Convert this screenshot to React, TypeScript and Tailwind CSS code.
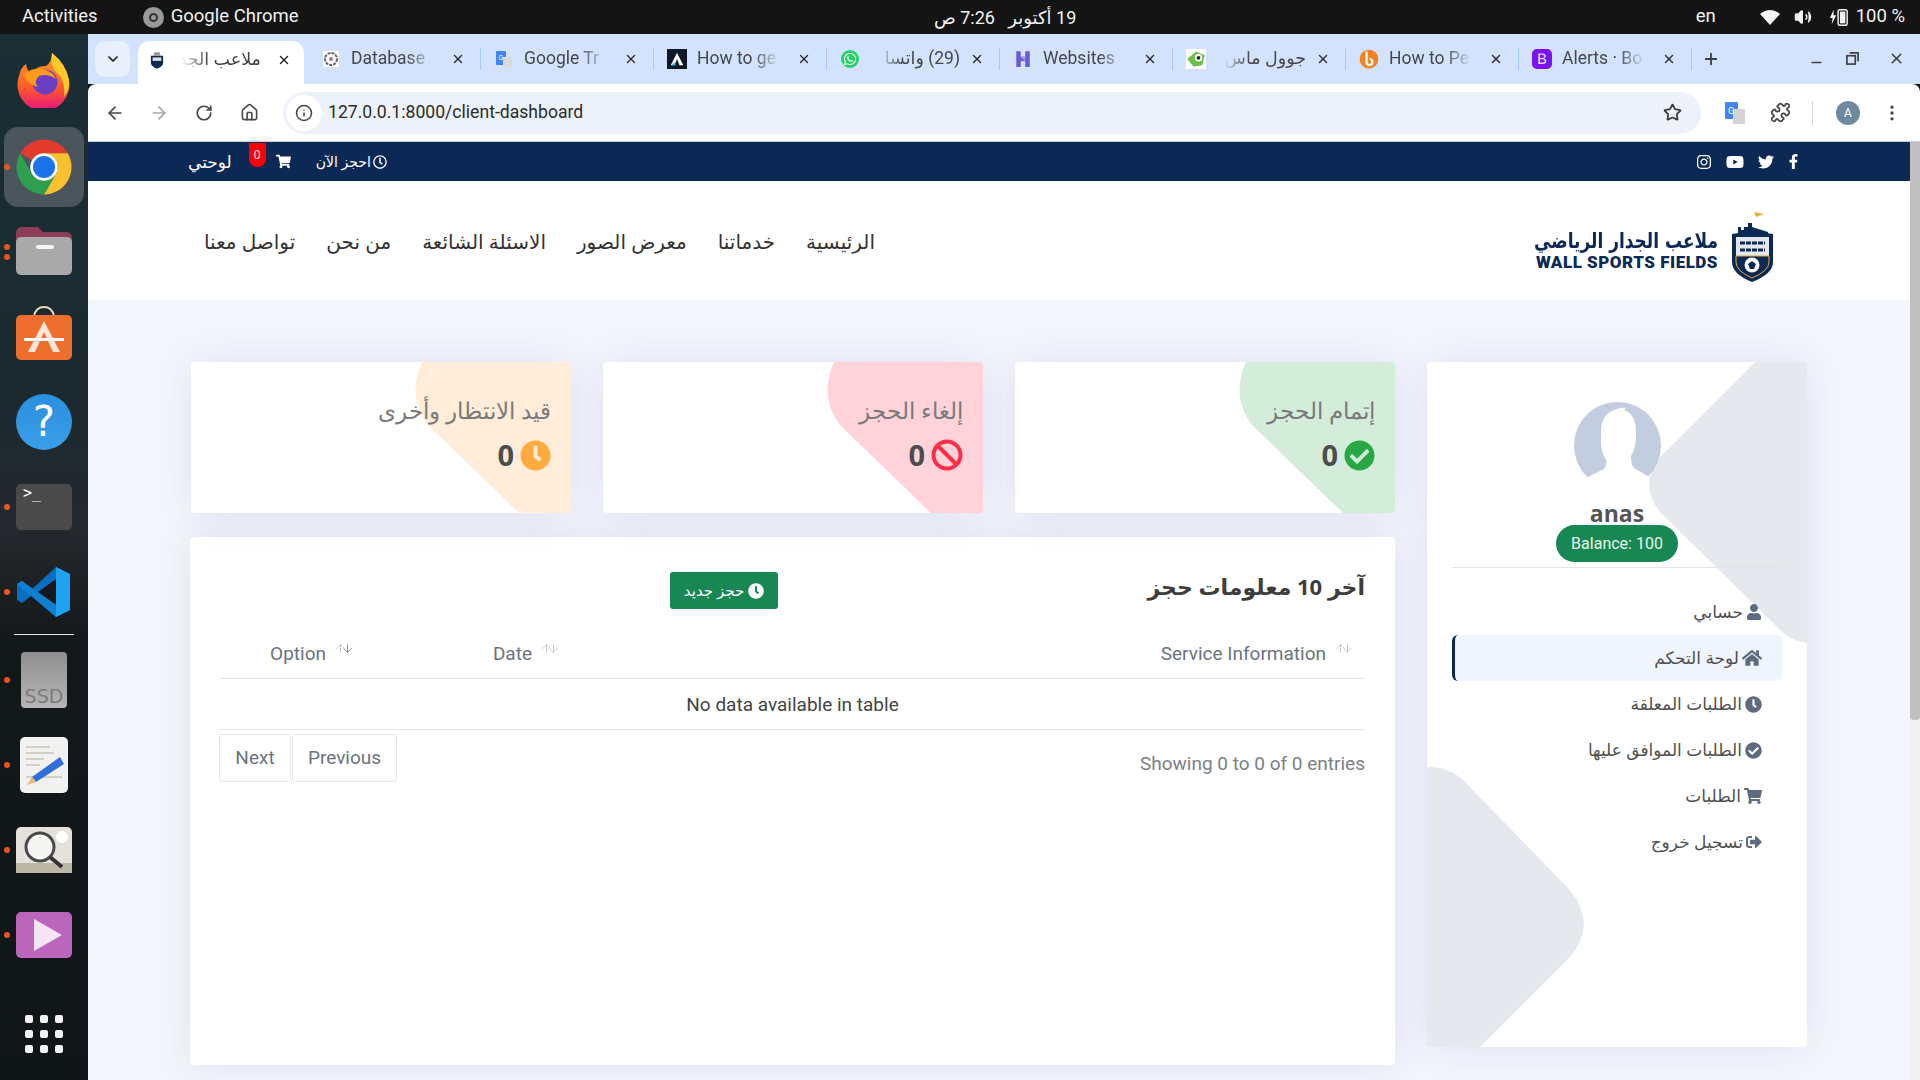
import React from "react";
import {
  FaUser, FaHome, FaClock, FaCheckCircle, FaShoppingCart, FaSignOutAlt, FaBan,
  FaInstagram, FaYoutube, FaTwitter, FaFacebookF, FaWhatsapp, FaRegClock,
} from "react-icons/fa";
import { BsBootstrapFill } from "react-icons/bs";
import { ArrowLeft, ArrowRight, RotateCw, Home, Info, Star, Puzzle, MoreVertical, ChevronDown, X, Plus, Minus, Volume2, ArrowUp, ArrowDown } from "lucide-react";

const GFav = () => (
  <svg viewBox="0 0 16 16" className="w-4 h-5"><rect x="0" y="0" width="10" height="14" rx="1" fill="#4285f4" /><rect x="7" y="6" width="9" height="10" fill="#d9d9d9" /><text x="2.5" y="9" fontSize="7" fill="#fff" fontFamily="Roboto">G</text></svg>
);
const Tabs: { t: string; rtl?: boolean; fav: React.ReactNode }[] = [
  { t: "Database", fav: <svg viewBox="0 0 16 16" className="w-4 h-4"><rect width="16" height="16" fill="#fff" /><circle cx="8" cy="8" r="6" fill="none" stroke="#666" strokeWidth="2" strokeDasharray="3 1" /><circle cx="8" cy="8" r="2" fill="#888" /></svg> },
  { t: "Google Tr", fav: <GFav /> },
  { t: "How to ge", fav: <svg viewBox="0 0 16 16" className="w-5 h-5"><rect width="16" height="16" fill="#111827" /><path d="M8 3 L13 13 H10 L8 8 L6 13 H3 Z" fill="#fff" /><path d="M3 13 H7 L6 11 Z" fill="#38bdf8" /></svg> },
  { t: "(29) واتسا", rtl: true, fav: <span className="flex w-[18px] h-[18px] items-center justify-center rounded-full bg-[#25d366] text-white"><FaWhatsapp size={14} /></span> },
  { t: "Websites", fav: <svg viewBox="0 0 16 16" className="w-[18px] h-5"><path d="M2 1 H6 V6 H10 V1 H14 V15 H10 V10 H6 V15 H2 Z" fill="#6d5bd0" /><path d="M6 6 L10 10 V6 Z" fill="#a79be8" /></svg> },
  { t: "جوول ماس", rtl: true, fav: <svg viewBox="0 0 16 16" className="w-5 h-5"><rect width="16" height="16" fill="#fff" /><path d="M1 8 L8 2 L15 5 L13 13 L6 14 Z" fill="#6cc04a" /><circle cx="10" cy="7" r="3" fill="#fff" /><circle cx="10" cy="7" r="1.5" fill="#222" /></svg> },
  { t: "How to Pe", fav: <svg viewBox="0 0 16 16" className="w-5 h-5"><circle cx="8" cy="8" r="7.5" fill="#f58220" /><path d="M6 2 V11 A2.4 2.4 0 1 0 8.5 8" stroke="#fff" strokeWidth="1.8" fill="none" /></svg> },
  { t: "Alerts · Bo", fav: <span className="text-[#7b12f0] flex"><BsBootstrapFill size={20} /></span> },
];

function Tab({ t, rtl, fav }: { t: string; rtl?: boolean; fav: React.ReactNode }) {
  return (
    <>
      <div className="flex items-center w-[166px] h-full pl-3 pb-[8px]">
        <span className="w-5 flex justify-center shrink-0 -ml-[2px]">{fav}</span>
        <span
          dir={rtl ? "rtl" : "ltr"}
          className={`ml-[10px] w-[90px] whitespace-nowrap text-[17.5px] text-[#45474c] ${rtl ? "[mask-image:linear-gradient(to_left,black_62%,transparent_92%)]" : "[mask-image:linear-gradient(to_right,black_62%,transparent_92%)]"}`}
        >
          {t}
        </span>
        <X size={14} strokeWidth={2.4} className="ml-[10px] text-[#2b2d30] shrink-0" />
      </div>
      <div className="w-px h-[22px] mx-[3px] mb-[8px] bg-[#a8c7fa]" />
    </>
  );
}

function DockItem({ dots = 0, active, children }: { dots?: number; active?: boolean; children: React.ReactNode }) {
  return (
    <div className="relative h-[85px] w-full flex items-center justify-center shrink-0">
      {active && <div className="absolute left-[4px] top-[3px] w-[80px] h-[80px] rounded-[14px] bg-[#4a565b]" />}
      <div className="absolute left-[4px] top-0 bottom-0 flex flex-col justify-center gap-[4px]">
        {Array.from({ length: dots }).map((_, i) => <span key={i} className="block w-[6px] h-[6px] rounded-full bg-[#e95420]" />)}
      </div>
      <div className="relative">{children}</div>
    </div>
  );
}

function Dock() {
  return (
    <div className="w-[88px] shrink-0 pt-[5px] flex flex-col bg-[linear-gradient(to_bottom,#1a2e35_0%,#1c2a30_35%,#24282c_48%,#13181b_58%,#101518_100%)]">
      <DockItem>
        <svg viewBox="0 0 56 56" className="w-[56px] h-[56px] -mt-[4px]">
          <defs>
            <linearGradient id="ff1" x1="0" y1="0" x2="0" y2="1"><stop offset="0" stopColor="#ffa01f" /><stop offset="0.6" stopColor="#ff5a2b" /><stop offset="1" stopColor="#e3127f" /></linearGradient>
          </defs>
          <path d="M36 1 Q50 12 53 28 A26 26 0 1 1 3 24 Q5 15 10 12 Q11 19 15 21 Q22 13 30 14 Q36 10 36 1Z" fill="url(#ff1)" />
          <path d="M36 1 Q50 12 53 28 Q54 38 48 45 Q50 28 40 20 Q34 14 36 1Z" fill="#ffc928" />
          <circle cx="29" cy="30" r="12.5" fill="#6a3ec2" />
          <path d="M8 22 Q18 14 30 18 Q38 21 40 27 Q31 21 23 24 Q17 30 22 35 Q10 32 8 22Z" fill="#ff9a1a" />
        </svg>
      </DockItem>
      <DockItem dots={1} active>
        <svg viewBox="0 0 48 48" className="w-[66px] h-[66px]">
          <path d="M6.68 14 A20 20 0 0 1 41.32 14 H24 A10 10 0 0 0 15.34 19 Z" fill="#e33b2e" />
          <path d="M41.32 14 A20 20 0 0 1 24 44 L32.66 29 A10 10 0 0 0 24 14 Z" fill="#fbc02d" />
          <path d="M24 44 A20 20 0 0 1 6.68 14 L15.34 29 A10 10 0 0 0 32.66 29 Z" fill="#2e9e4f" />
          <circle cx="24" cy="24" r="10" fill="#fff" />
          <circle cx="24" cy="24" r="8" fill="#1a73e8" />
        </svg>
      </DockItem>
      <DockItem dots={2}>
        <svg viewBox="0 0 56 50" className="w-[56px] h-[50px] -mt-[4px]">
          <path d="M0 8 Q0 2 6 2 H22 L27 7 H50 Q56 7 56 13 V30 H0Z" fill="#8e3d56" />
          <rect x="0" y="12" width="56" height="38" rx="5" fill="#a9a9a9" />
          <rect x="20" y="20" width="18" height="4" rx="2" fill="#f5f5f5" />
        </svg>
      </DockItem>
      <DockItem>
        <svg viewBox="0 0 56 56" className="w-[56px] h-[56px] -mt-[10px]">
          <path d="M18 12 Q20 3 28 3 Q36 3 38 12" fill="none" stroke="#e8d9b8" strokeWidth="2" />
          <rect y="11" width="56" height="45" rx="5" fill="#ee6f2d" />
          <path d="M28 17 L44 48 H37 L28 28 L19 48 H12Z" fill="#fde5d8" />
          <rect x="8" y="34" width="40" height="3" fill="#fff" />
        </svg>
      </DockItem>
      <DockItem>
        <div className="w-[56px] h-[56px] rounded-full bg-[linear-gradient(#2b8fe0,#3a9ee8)] flex items-center justify-center text-white text-[42px] font-['DejaVu_Sans']">?</div>
      </DockItem>
      <DockItem dots={1}>
        <div className="w-[56px] h-[46px] rounded-[5px] bg-[#4a4a4a] text-white text-[15px] leading-[18px] pl-[7px] font-['DejaVu_Sans_Mono'] ">&gt;_</div>
      </DockItem>
      <DockItem dots={1}>
        <svg viewBox="0 0 56 56" className="w-[56px] h-[56px]">
          <path d="M40 3 L54 10 V46 L40 53 L16 31 L6 39 L1 36 V20 L6 17 L16 25Z" fill="#0a6fc0" />
          <path d="M40 3 L54 10 V46 L40 53Z" fill="#1fa3f1" />
          <path d="M40 15 L22 28 L40 41Z" fill="#16181c" />
          <path d="M1 20 L6 17 L40 41 V53 Z" fill="#0f80d0" />
        </svg>
      </DockItem>
      <div className="mx-[14px] h-px shrink-0 bg-[#e8e8e8]" />
      <div className="h-[2px] shrink-0" />
      <DockItem dots={1}>
        <div className="w-[46px] h-[56px] rounded-[4px] bg-[linear-gradient(#8f8f8f,#b5b5b5)] flex items-end justify-center text-[#7c7c7c] text-[19px] leading-[24px] font-['DejaVu_Sans']">SSD</div>
      </DockItem>
      <DockItem dots={1}>
        <svg viewBox="0 0 48 56" className="w-[48px] h-[56px]">
          <rect width="48" height="56" rx="5" fill="#f1f1f0" />
          <path d="M6 10 H30 M6 16 H34 M6 22 H24 M6 28 H20 M6 40 H42" stroke="#c8c4b6" strokeWidth="1.6" />
          <path d="M12 40 L40 20 L44 27 L16 45Z" fill="#2f6fdc" />
          <path d="M7 48 L12 40 L16 45Z" fill="#eab676" />
        </svg>
      </DockItem>
      <DockItem dots={1}>
        <svg viewBox="0 0 56 46" className="w-[56px] h-[46px]">
          <rect width="56" height="46" rx="5" fill="#e4e2da" />
          <rect y="36" width="56" height="10" fill="#bdb8a6" />
          <circle cx="24" cy="20" r="14" fill="#f5f5f2" stroke="#4a4a4a" strokeWidth="3" />
          <path d="M34 30 L46 40" stroke="#333" strokeWidth="4" />
          <circle cx="46" cy="10" r="6" fill="#fff" />
        </svg>
      </DockItem>
      <DockItem dots={1}>
        <svg viewBox="0 0 56 46" className="w-[56px] h-[46px]">
          <rect width="56" height="46" rx="5" fill="#bc66bb" />
          <path d="M18 7 L46 23 L18 39Z" fill="#f4e4f4" />
        </svg>
      </DockItem>
      <div className="flex-1 flex items-center justify-center">
        <div className="grid grid-cols-3 gap-[7px] pt-[10px]">
          {Array.from({ length: 9 }).map((_, i) => <span key={i} className="block w-[8px] h-[8px] rounded-[2px] bg-[#f2f2f2]" />)}
        </div>
      </div>
    </div>
  );
}

function TopBar() {
  return (
    <div className="h-[34px] shrink-0 bg-[#141414] text-[#f2f2f2] text-[18.5px] font-['Roboto',sans-serif] flex items-center relative">
      <span className="ml-[22px]">Activities</span>
      <span className="ml-[45px] w-[21px] h-[21px] rounded-full bg-[#9a9a9a] flex items-center justify-center">
        <span className="w-[9px] h-[9px] rounded-full border-2 border-[#333]" />
      </span>
      <span className="ml-[7px]">Google Chrome</span>
      <span className="flex-1 flex justify-center pl-[16px]"><span dir="rtl" className="text-[18px] font-['Roboto','DejaVu_Sans',sans-serif]">19 أكتوبر&nbsp;&nbsp;&nbsp;7:26 ص</span></span>
      <span className="mr-[44px]">en</span>
      <svg viewBox="0 0 20 16" className="w-5 h-4 mr-[14px]"><path d="M0 5 Q10 -3 20 5 L10 16Z" fill="#f2f2f2" /></svg>
      <Volume2 size={18} fill="#f2f2f2" className="mr-[17px]" />
      <svg viewBox="0 0 22 20" className="w-[20px] h-[20px] mr-[7px]"><path d="M5 2 L1 11 H4 L3 18 L8 8 H5Z" fill="#f2f2f2" /><rect x="10" y="2" width="10" height="17" rx="2" fill="none" stroke="#f2f2f2" strokeWidth="1.6" /><rect x="12" y="4" width="6" height="13" fill="#f2f2f2" /></svg>
      <span className="mr-[15px]">100 %</span>
    </div>
  );
}

function BrowserChrome() {
  return (
    <>
      <div className="h-[50px] shrink-0 bg-[#d3e3fd] flex items-end pl-[7px] font-['Roboto',sans-serif]">
        <div className="w-[35px] h-[36px] mb-[7px] rounded-[10px] bg-[#e9f0fc] flex items-center justify-center mr-[8px]">
          <ChevronDown size={16} strokeWidth={2.6} className="text-[#1f1f1f]" />
        </div>
        <div className="flex items-center w-[166px] h-[43px] bg-white rounded-t-[12px] pl-[11px] pb-[6px] mr-[7px]">
          <svg viewBox="0 0 16 20" className="w-[14px] h-[18px] shrink-0 ml-[1px]"><path d="M1 5 H15 V13 Q15 17 8 20 Q1 17 1 13Z" fill="#0c2955" /><rect x="3" y="7" width="10" height="4" fill="#ddd" /><path d="M5 1 H11 L12 5 H4Z" fill="#999" /></svg>
          <span dir="rtl" className="ml-[13px] w-[84px] whitespace-nowrap text-[17.5px] text-[#3c3f43] font-['Roboto','DejaVu_Sans',sans-serif] [mask-image:linear-gradient(to_left,black_62%,transparent_95%)]">ملاعب الجد</span>
          <X size={14} strokeWidth={2.4} className="ml-[16px] text-[#1f1f1f] shrink-0" />
        </div>
        <div className="flex items-center h-[43px] font-['Roboto','DejaVu_Sans',sans-serif]">
          {Tabs.map((x) => <Tab key={x.t} {...x} />)}
        </div>
        <div className="flex-1 flex items-center h-[43px] pb-[8px] text-[#3c3f43]">
          <Plus size={18} strokeWidth={2.4} className="ml-[7px]" />
          <span className="flex-1" />
          <Minus size={15} strokeWidth={2.4} className="mr-[22px] mt-[8px]" />
          <svg viewBox="0 0 14 14" className="w-[13px] h-[13px] mr-[29px]"><rect x="1" y="4" width="9" height="9" fill="none" stroke="#3c3f43" strokeWidth="1.8" /><path d="M4 1 H13 V10" fill="none" stroke="#3c3f43" strokeWidth="1.8" /></svg>
          <X size={17} strokeWidth={2.2} className="mr-[15px]" />
        </div>
      </div>
      <div className="h-[58px] shrink-0 bg-white flex items-center rounded-t-[8px] text-[#474747] border-b border-[#c9cfd9] font-['Roboto',sans-serif]">
        <ArrowLeft size={20} className="ml-[17px]" />
        <ArrowRight size={20} className="ml-[24px] text-[#a6a6a6]" />
        <RotateCw size={18} strokeWidth={2.3} className="ml-[26px]" />
        <Home size={19} className="ml-[27px]" />
        <div className="ml-[24px] w-[1418px] h-[42px] rounded-full bg-[#edf2fa] flex items-center">
          <span className="ml-[3px] w-[36px] h-[36px] rounded-full bg-white flex items-center justify-center"><Info size={18} /></span>
          <span className="ml-[6px] text-[17.6px] text-[#2b2b2b]">127.0.0.1:8000/client-dashboard</span>
          <span className="flex-1" />
          <Star size={19} strokeWidth={2.2} className="mr-[19px] text-[#3a3a3a]" />
        </div>
        <svg viewBox="0 0 20 22" className="ml-[24px] w-5 h-[22px]"><rect width="13" height="17" rx="1" fill="#4285f4" /><rect x="8" y="7" width="12" height="15" fill="#d4d4d4" /><text x="3" y="12" fontSize="9" fill="#fff" fontFamily="Roboto">G</text></svg>
        <Puzzle size={21} className="ml-[25px]" />
        <div className="ml-[21px] w-px h-[24px] bg-[#d0d7e2]" />
        <span className="ml-[23px] w-[24px] h-[24px] rounded-full bg-[#6f8a9e] text-white text-[12px] flex items-center justify-center">A</span>
        <MoreVertical size={20} className="ml-[22px]" />
      </div>
    </>
  );
}

function Logo() {
  return (
    <div className="flex gap-[12px] self-stretch">
      <div className="flex flex-col items-end text-[#0c2955] pt-[47px]">
        <span dir="rtl" className="text-[17px] font-bold leading-[24px] scale-y-125 font-['DejaVu_Sans',sans-serif]">ملاعب الجدار الرياضي</span>
        <span className="text-[17px] font-black tracking-[0.5px] leading-[20px] font-['Roboto',sans-serif]">WALL SPORTS FIELDS</span>
      </div>
      <div className="pt-[31px]">
        <svg viewBox="0 0 45 70" className="w-[45px] h-[70px]">
          <path d="M24 0 L34 2 L26 5Z" fill="#f0b040" />
          <path d="M8 22 V15 H11 V18 H14 V15 H18 V11 H22 V15 L38 20 V22Z" fill="#0c2955" />
          <path d="M2 22 Q22 18 43 22 V50 Q43 62 22 70 Q2 62 2 50Z" fill="#0c2955" />
          <rect x="6" y="25" width="33" height="19" fill="#e4e7ee" />
          <path d="M6 44 H39 V50 Q39 59 22 66 Q6 59 6 50Z" fill="#0c2955" stroke="#e0a83a" strokeWidth="1" />
          <circle cx="22" cy="53" r="7.5" fill="#fff" />
          <path d="M22 49 L26 52 L24 57 H20 L18 52Z" fill="#0c2955" />
          <path d="M10 31 H35 M10 38 H35" stroke="#0c2955" strokeWidth="3" strokeDasharray="5 1" />
        </svg>
      </div>
    </div>
  );
}

const NavLinks = ["الرئيسية", "خدماتنا", "معرض الصور", "الاسئلة الشائعة", "من نحن", "تواصل معنا"];

function SiteHeader() {
  return (
    <>
      <div className="h-[39px] shrink-0 bg-[#0c2955] flex items-center justify-between pl-[100px] pr-[109px] text-white">
        <div className="flex items-center">
          <span dir="rtl" className="text-[17px]">لوحتي</span>
          <span className="ml-[17px] mb-[14px] w-[17px] h-[24px] rounded-b-[8px] bg-[#ff0000] text-[12px] flex items-center justify-center leading-none">0</span>
          <FaShoppingCart size={15} className="ml-[10px]" />
          <span className="ml-[25px] flex items-center gap-[2px] text-[14px]" dir="rtl"><FaRegClock size={14} /><span>احجز الآن</span></span>
        </div>
        <div className="flex items-center gap-[14px]">
          <FaInstagram size={16} />
          <FaYoutube size={18} />
          <FaTwitter size={16} />
          <FaFacebookF size={15} className="-ml-[2px]" />
        </div>
      </div>
      <div className="h-[119px] shrink-0 bg-white flex items-center justify-between pl-[116px] pr-[135px]">
        <div dir="rtl" className="flex items-center gap-[31px] text-[20px] text-[#333] mt-[2px]">
          {NavLinks.map((n) => <span key={n}>{n}</span>)}
        </div>
        <Logo />
      </div>
    </>
  );
}

function StatCard({ label, tint, icon }: { label: string; tint: string; icon: React.ReactNode }) {
  return (
    <div className="relative w-[380px] h-[151px] bg-white rounded-[4px] overflow-hidden shadow-[0_0_40px_rgba(82,63,145,0.12)]">
      <svg viewBox="0 0 380 151" className="absolute inset-0 w-full h-full">
        <path d="M231 0 C221 22 222 44 238 64 L328 151 H380 V0 Z" fill={tint} />
      </svg>
      <div dir="rtl" className="relative pt-[30px] pr-[20px]">
        <div className="text-[23px] leading-[36px] font-light text-[#7a7a7a]">{label}</div>
        <div className="flex items-center gap-[6px] mt-[9px] text-[29px] leading-[36px] font-bold text-[#4d4d4d] font-['Open_Sans',sans-serif]">
          {icon}<span>0</span>
        </div>
      </div>
    </div>
  );
}

function SortHead({ label, strong }: { label: string; strong?: boolean }) {
  return (
    <div className="flex items-center gap-[8px] pr-[11px] h-full">
      <span className={`flex -mt-[10px] ${strong ? "text-[#666]" : "text-[#bdbdbd]"}`}>
        <ArrowDown size={13} strokeWidth={1.4} className="-ml-[3px]" /><ArrowUp size={13} strokeWidth={1.4} className="-mr-[3px] text-[#bdbdbd]" />
      </span>
      <span className="text-[19px] mt-[2px] text-[#6b7380] font-['Roboto',sans-serif]">{label}</span>
    </div>
  );
}

function TableCard() {
  return (
    <div className="w-[1205px] h-[528px] bg-white rounded-[4px] shadow-[0_0_40px_rgba(82,63,145,0.12)] px-[30px] pt-[35px]" dir="rtl">
      <div className="flex items-center h-[37px]">
        <h2 className="text-[22px] font-bold text-[#3d3d3d] w-[300px] -mt-[9px]">آخر 10 معلومات حجز</h2>
        <div className="w-[287px]" />
        <button className="h-[37px] w-[108px] rounded-[3px] bg-[#198754] text-white text-[15px] flex items-center justify-center gap-[4px]">
          <FaClock size={16} /><span>حجز جديد</span>
        </button>
      </div>
      <div className="grid grid-cols-[794px_206px_145px] h-[50px] mt-[20px] items-center border-b border-[#dfe3ea] pb-[1px]">
        <SortHead label="Service Information" />
        <SortHead label="Date" />
        <SortHead label="Option" strong />
      </div>
      <div className="h-[51px] pt-[3px] flex items-center justify-center text-[19px] text-[#444] border-b border-[#dfe3ea] font-['Roboto',sans-serif]">No data available in table</div>
      <div className="flex items-start justify-between pt-[4px] -ml-px font-['Roboto',sans-serif]" dir="ltr">
        <div className="flex gap-px text-[19px] text-[#6b7380]">
          <span className="h-[48px] w-[72px] flex items-center justify-center border border-[#e4e7ec] rounded-[3px]">Next</span>
          <span className="h-[48px] w-[105px] flex items-center justify-center border border-[#e4e7ec] rounded-[3px]">Previous</span>
        </div>
        <span className="text-[19px] text-[#7b8087] mt-[16px]">Showing 0 to 0 of 0 entries</span>
      </div>
    </div>
  );
}

const Menu: { t: string; i: React.ReactNode; active?: boolean }[] = [
  { t: "حسابي", i: <FaUser size={16} /> },
  { t: "لوحة التحكم", i: <FaHome size={20} />, active: true },
  { t: "الطلبات المعلقة", i: <FaClock size={17} /> },
  { t: "الطلبات الموافق عليها", i: <FaCheckCircle size={17} /> },
  { t: "الطلبات", i: <FaShoppingCart size={18} /> },
  { t: "تسجيل خروج", i: <FaSignOutAlt size={16} /> },
];

function SideCard() {
  return (
    <div className="relative w-[380px] h-[685px] shrink-0 bg-white rounded-[4px] overflow-hidden shadow-[0_0_40px_rgba(82,63,145,0.12)]">
      <svg viewBox="0 0 380 685" className="absolute inset-0 w-full h-full">
        <path d="M328 0 L233 95 Q211 122 233 150 L350 265 Q362 279 380 281 V0 Z" fill="#e5e8ed" />
        <path d="M0 405 Q22 405 36 418 L140 525 Q172 561 143 595 L53 685 H0 Z" fill="#e5e8ed" />
      </svg>
      <div className="relative flex flex-col items-center pt-[40px]">
        <svg viewBox="0 0 87 75" className="w-[87px] h-[75px] shrink-0">
          <circle cx="43.5" cy="43.5" r="43.5" fill="#c3cde0" />
          <path d="M14 75 L30 67 Q33 64 32 58 Q26 48 27 34 Q26 16 36 10 Q46 5 52 6 L50 8 Q62 12 62 30 Q63 44 57 54 Q57 63 60 66 L75 75 Z" fill="#fff" />
        </svg>
        <div className="mt-[21px] text-[23px] leading-[30px] font-bold text-[#555] font-['Open_Sans',sans-serif]">anas</div>
        <div className="-mt-[3px] w-[122px] h-[37px] rounded-full bg-[#198754] text-[#e6f5ec] text-[16px] flex items-center justify-center font-['Roboto',sans-serif]">Balance: 100</div>
        <div className="mt-[5px] w-[330px] h-px bg-[#e2e4e8]" />
        <div dir="rtl" className="mt-[21px] w-[330px] flex flex-col">
          {Menu.map((m) => (
            <div
              key={m.t}
              className={`h-[46px] pr-[20px] flex items-center gap-[3px] text-[17px] text-[#4f4f4f] ${m.active ? "bg-[#f0f5fd] border-l-[3px] border-[#0c2955] rounded-[6px]" : ""}`}
            >
              <span className="text-[#5d6b80] flex">{m.i}</span>
              <span>{m.t}</span>
            </div>
          ))}
        </div>
      </div>
    </div>
  );
}

export default function App() {
  return (
    <div className="w-[1920px] h-[1080px] overflow-hidden flex flex-col bg-[#141414] font-['Open_Sans','DejaVu_Sans',sans-serif]">
      <TopBar />
      <div className="flex flex-1 min-h-0">
        <Dock />
        <div className="flex-1 min-w-0 flex flex-col">
          <BrowserChrome />
          <div className="flex flex-1 min-h-0">
            <div className="w-[1822px] flex flex-col bg-[#f4f6fd] overflow-hidden">
              <SiteHeader />
              <div dir="rtl" className="flex gap-[32px] pt-[62px] pr-[103px]">
                <SideCard />
                <div className="flex flex-col gap-[24px]">
                  <div className="flex gap-[32px]">
                    <StatCard label="إتمام الحجز" tint="#d4edda" icon={<span className="text-[#28a745] flex"><FaCheckCircle size={31} /></span>} />
                    <StatCard label="إلغاء الحجز" tint="#ffd3d9" icon={<span className="text-[#ff2d46] flex"><FaBan size={32} /></span>} />
                    <StatCard label="قيد الانتظار وأخرى" tint="#ffedd9" icon={<span className="text-[#ffab40] flex"><FaClock size={31} /></span>} />
                  </div>
                  <TableCard />
                </div>
              </div>
            </div>
            <div className="w-[10px] bg-[#f1f1f1] flex flex-col">
              <div className="h-[578px] bg-[#bfbfbf] rounded-b-[4px]" />
            </div>
          </div>
        </div>
      </div>
    </div>
  );
}
